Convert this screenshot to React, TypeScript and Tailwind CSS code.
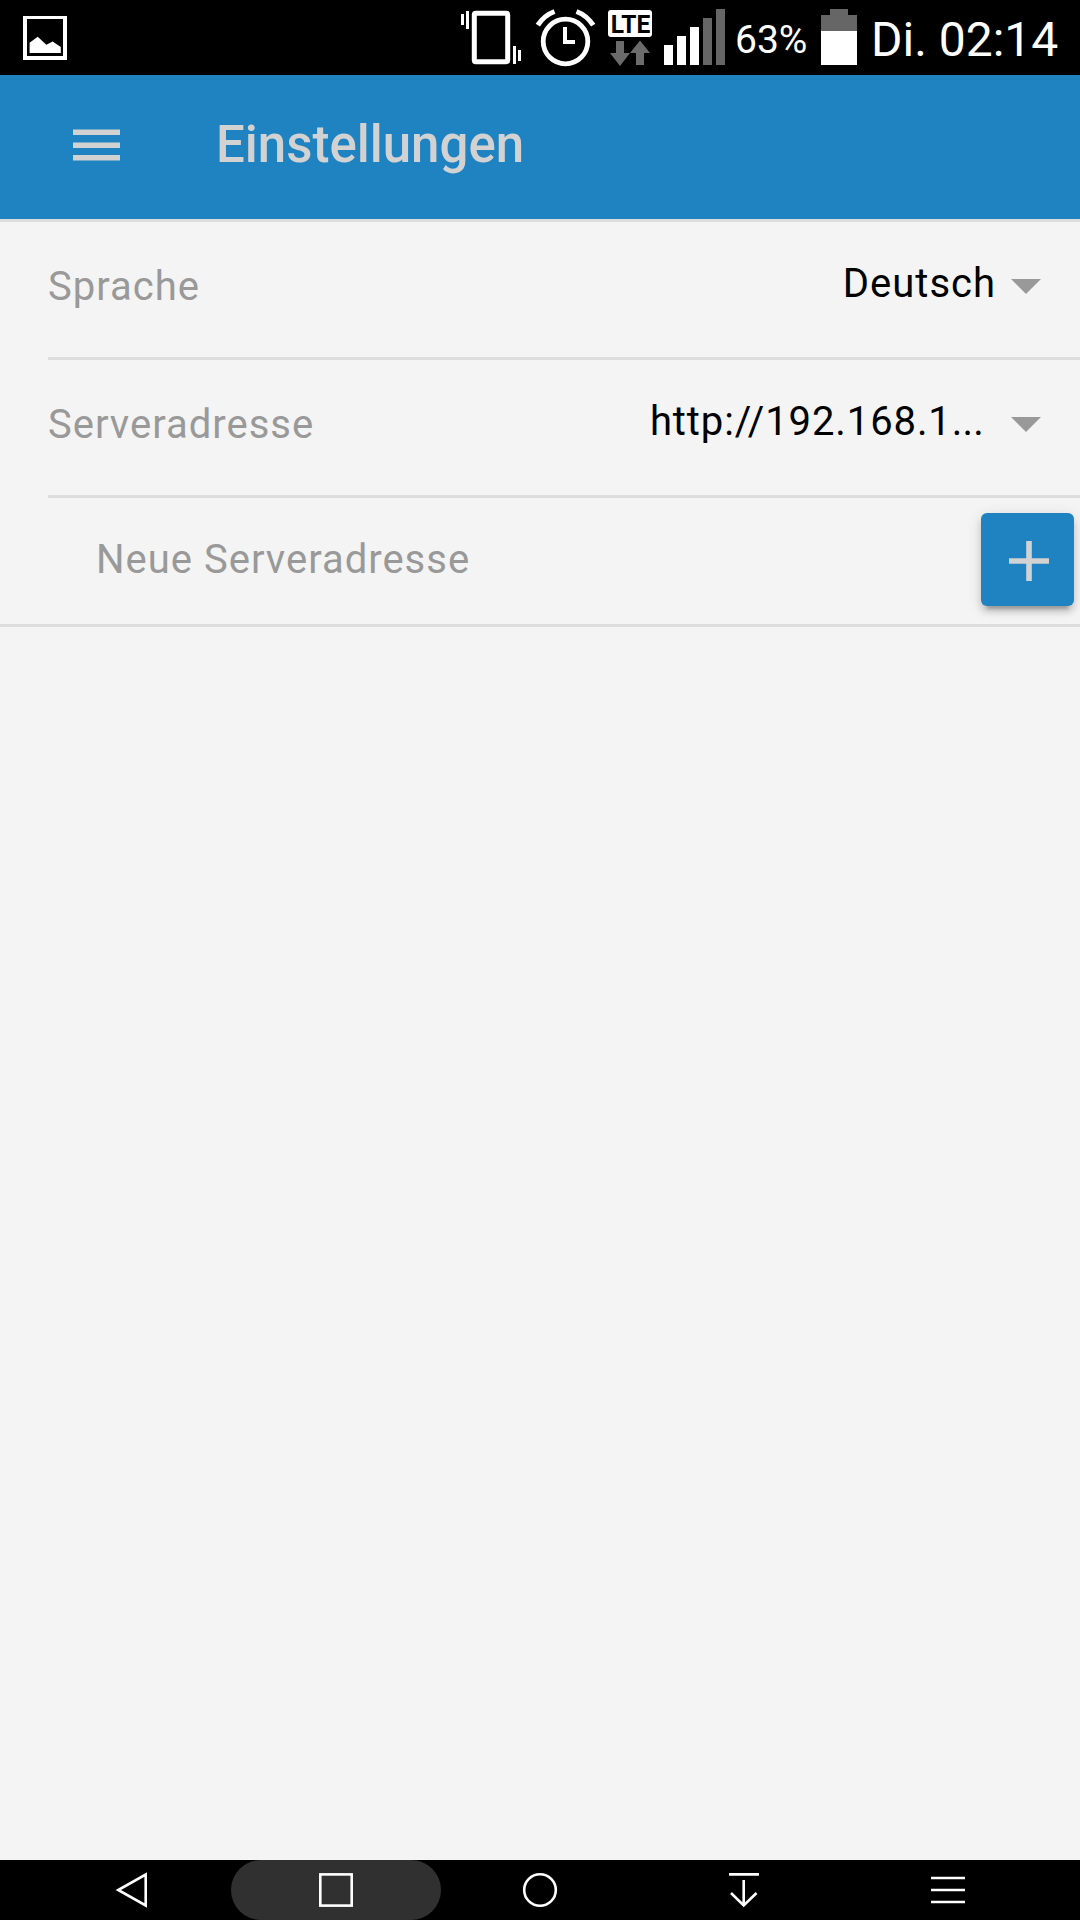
import type { ReactNode } from "react";

function StatusBar() {
  return (
    <header className="flex h-[75px] items-start bg-black text-white">
      <svg className="ml-[23px] mt-4 h-11 w-11" viewBox="0 0 44 44">
        <path fillRule="evenodd" d="M0 0H44V44H0ZM4 3V40H40V3Z" fill="white" />
        <path d="M6.6 37V26.7L14.7 20.7L23.4 28.8L29.6 25.6L37.8 31V37Z" fill="white" />
      </svg>

      <div className="ml-auto flex">
        <svg className="h-[75px] w-[62px]" viewBox="460 0 62 75">
          <rect x="474.3" y="13.3" width="33.4" height="48.4" rx="1.5" fill="none" stroke="white" strokeWidth="5" />
          <path d="M461 14h3v11h-3ZM466 11h3v18h-3ZM513 46h3v18h-3ZM518 50h3v11h-3Z" fill="white" />
        </svg>
        <svg className="ml-[13px] h-[75px] w-[62px]" viewBox="535 0 62 75" fill="none" stroke="white">
          <circle cx="565.5" cy="41.5" r="22.3" strokeWidth="4.8" />
          <path d="M565 27V42H575" strokeWidth="4" />
          <path d="M537.8 25.2Q544 15.5 554.5 11.5M593.2 25.2Q587 15.5 576.5 11.5" strokeWidth="5" />
        </svg>
        <svg className="ml-2.5 h-[75px] w-[46px]" viewBox="607 0 46 75">
          <rect x="608" y="10" width="44" height="27" rx="3" fill="white" />
          <text
            x="610.7"
            y="33"
            fontSize="26.5"
            fontWeight="700"
            fontFamily="Roboto, sans-serif"
            textLength="39.5"
            lengthAdjust="spacingAndGlyphs"
            fill="black"
          >
            LTE
          </text>
          <path d="M616 41h8v12h6L620 66L610 53h6ZM636 65V53h-6L640 40.5L650 53h-6V65Z" fill="#6b6b6b" />
        </svg>
        <svg className="ml-[11px] h-[75px] w-[61px]" viewBox="664 0 61 75">
          <path d="M664 45h9v20h-9ZM677 36h9v29h-9ZM690 27h9v38h-9Z" fill="white" />
          <path d="M703 18h9v47h-9ZM716 9h9v56h-9Z" fill="#666666" />
        </svg>
        <span className="ml-2.5 mt-4 w-[73px] whitespace-nowrap text-[39px] leading-[48px]">63%</span>
        <svg className="ml-[13px] h-[75px] w-9" viewBox="821 0 36 75">
          <path d="M830 9h18v6h9v16h-36V15h9Z" fill="#666666" />
          <path d="M821 31h36v34h-36Z" fill="white" />
        </svg>
        <span className="ml-3.5 mt-2.5 w-[209px] whitespace-nowrap text-[48px] leading-[60px]">Di. 02:14</span>
      </div>
    </header>
  );
}

function TitleBar() {
  return (
    <div className="flex h-[147px] items-start border-b-[3px] border-[#dddddd] bg-[#1f82c1] text-[#d2d2d2]">
      <button className="ml-[73px] mt-[54px]" aria-label="Menü">
        <svg className="block h-8 w-[47px]" viewBox="0 0 47 32" fill="currentColor">
          <path d="M0 .5h47V6H0ZM0 13.5h47V19H0ZM0 26h47v5.5H0Z" />
        </svg>
      </button>
      <h1 className="ml-24 mt-[39px] text-[51px] font-medium leading-[62px]">Einstellungen</h1>
    </div>
  );
}

function SelectRow({ label, children }: { label: string; children: ReactNode }) {
  return (
    <div className="ml-12 flex h-[138px] items-start border-b-[3px] border-[#dddddd] pr-[39px]">
      <label className="mt-[41px] text-[40px] leading-[48px] tracking-[1px] text-[#999999]">{label}</label>
      <div className="ml-auto flex">
        {children}
        <svg className="mt-[57px] h-[15px] w-[30px]" viewBox="0 0 30 15">
          <path d="M0 0h30L15 15Z" fill="#999999" />
        </svg>
      </div>
    </div>
  );
}

function NavItem({ active = false, children }: { active?: boolean; children: ReactNode }) {
  return (
    <button className="flex h-[60px] w-[204px] items-center justify-center">
      <span
        className={
          active
            ? "flex h-[60px] w-[210px] shrink-0 items-center justify-center rounded-[30px] bg-[#303030]"
            : "flex items-center justify-center"
        }
      >
        <svg className="h-9 w-9" viewBox="0 0 36 36" fill="none" stroke="white" strokeWidth="2.6">
          {children}
        </svg>
      </span>
    </button>
  );
}

export default function App() {
  return (
    <div className="flex h-[1920px] w-[1080px] flex-col overflow-hidden bg-[#f4f4f4] font-['Roboto',sans-serif]">
      <StatusBar />
      <TitleBar />
      <main className="flex-1">
        <SelectRow label="Sprache">
          <span className="mr-[15px] mt-[38px] text-[40px] leading-[48px] tracking-[1px] text-black">Deutsch</span>
        </SelectRow>
        <SelectRow label="Serveradresse">
          <span className="mr-[27px] mt-[38px] text-[40px] leading-[48px] tracking-[0.9px] text-black">
            http://192.168.1<span className="tracking-[0.2px]">...</span>
          </span>
        </SelectRow>
        <div className="flex h-[129px] items-start border-b-[3px] border-[#dddddd] pl-24 pr-1.5">
          <span className="mt-[38px] text-[40px] leading-[48px] tracking-[1px] text-[#999999]">Neue Serveradresse</span>
          <button
            className="ml-auto mt-[15px] flex h-[93px] w-[93px] rounded-md bg-[#1f82c1] shadow-[0_9px_3px_-6px_rgba(0,0,0,0.2),0_6px_6px_rgba(0,0,0,0.14),0_3px_15px_rgba(0,0,0,0.12)]"
            aria-label="Hinzufügen"
          >
            <svg className="ml-7 mt-7 h-10 w-10" viewBox="0 0 40 40" fill="#d2d2d2">
              <path d="M17.2 0h5.6v17.2H40v5.6H22.8V40h-5.6V22.8H0v-5.6h17.2Z" />
            </svg>
          </button>
        </div>
      </main>
      <nav className="flex h-[60px] justify-center bg-black">
        <NavItem>
          <path d="M31.7 2.5V33.5L4.2 18Z" />
        </NavItem>
        <NavItem active>
          <rect x="2.3" y="2.4" width="31.4" height="31.2" />
        </NavItem>
        <NavItem>
          <circle cx="18" cy="18" r="15.8" />
        </NavItem>
        <NavItem>
          <path d="M3 2.4H33M17.7 8V34M5 21L17.7 33.5L30.5 21" />
        </NavItem>
        <NavItem>
          <path d="M1 6H35M1 18H35M1 30H35" />
        </NavItem>
      </nav>
    </div>
  );
}
